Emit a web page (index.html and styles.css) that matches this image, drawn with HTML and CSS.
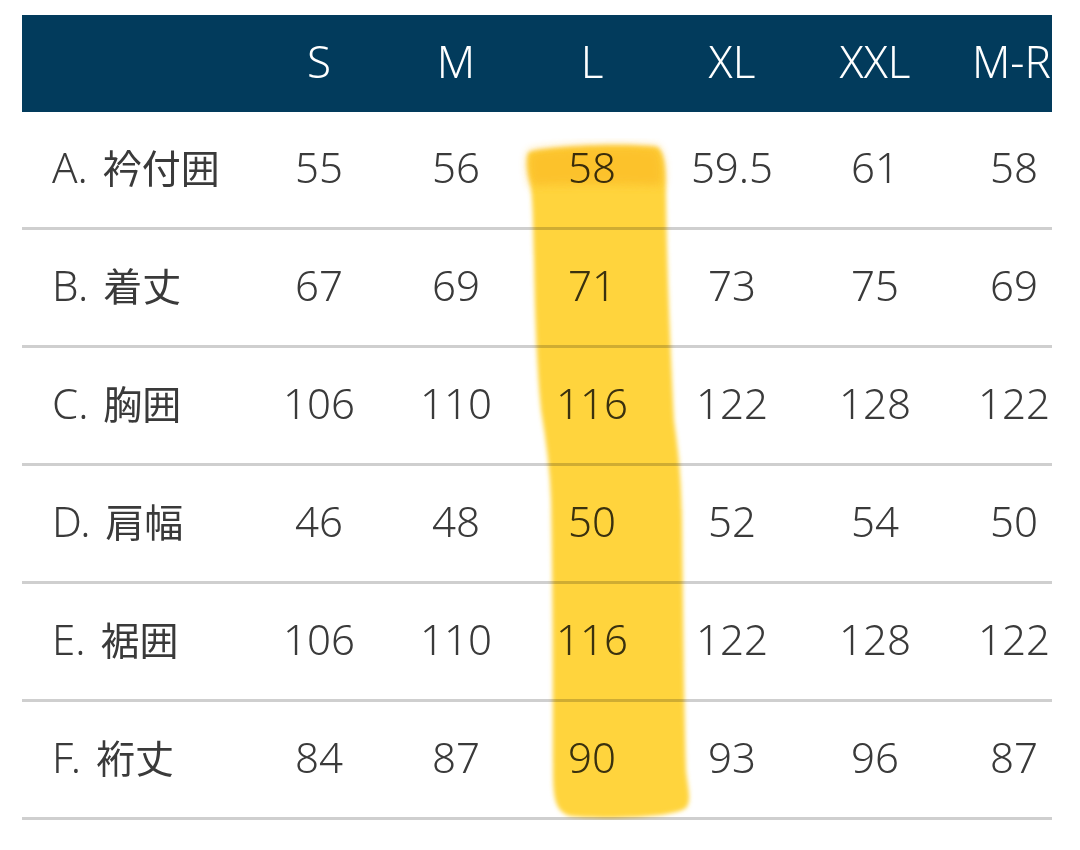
FILE: index.html
```html
<!DOCTYPE html>
<html lang="ja">
<head>
<meta charset="utf-8">
<title>サイズ表</title>
<link rel="stylesheet" href="styles.css">
</head>
<body>
<div class="sheet">
  <div class="table">
    <div class="row head">
      <div class="cell label"></div>
      <div class="cell">S</div>
      <div class="cell">M</div>
      <div class="cell">L</div>
      <div class="cell">XL</div>
      <div class="cell">XXL</div>
      <div class="cell">M-R</div>
    </div>
    <div class="row">
      <div class="cell label">A. <span class="jp">衿付囲</span></div>
      <div class="cell">55</div><div class="cell">56</div><div class="cell">58</div>
      <div class="cell">59.5</div><div class="cell">61</div><div class="cell">58</div>
    </div>
    <div class="row">
      <div class="cell label">B. <span class="jp">着丈</span></div>
      <div class="cell">67</div><div class="cell">69</div><div class="cell">71</div>
      <div class="cell">73</div><div class="cell">75</div><div class="cell">69</div>
    </div>
    <div class="row">
      <div class="cell label">C. <span class="jp">胸囲</span></div>
      <div class="cell">106</div><div class="cell">110</div><div class="cell">116</div>
      <div class="cell">122</div><div class="cell">128</div><div class="cell">122</div>
    </div>
    <div class="row">
      <div class="cell label">D. <span class="jp">肩幅</span></div>
      <div class="cell">46</div><div class="cell">48</div><div class="cell">50</div>
      <div class="cell">52</div><div class="cell">54</div><div class="cell">50</div>
    </div>
    <div class="row">
      <div class="cell label">E. <span class="jp">裾囲</span></div>
      <div class="cell">106</div><div class="cell">110</div><div class="cell">116</div>
      <div class="cell">122</div><div class="cell">128</div><div class="cell">122</div>
    </div>
    <div class="row">
      <div class="cell label">F. <span class="jp">裄丈</span></div>
      <div class="cell">84</div><div class="cell">87</div><div class="cell">90</div>
      <div class="cell">93</div><div class="cell">96</div><div class="cell">87</div>
    </div>
  </div>
  <svg class="marker" viewBox="0 0 1080 850" aria-hidden="true">
    <defs>
      <filter id="soft" x="-10%" y="-10%" width="120%" height="120%">
        <feGaussianBlur stdDeviation="2.2"/>
      </filter>
      <filter id="softer" x="-20%" y="-20%" width="140%" height="140%">
        <feGaussianBlur stdDeviation="5"/>
      </filter>
    </defs>
    <path filter="url(#soft)" fill="#ffd43c" d="M529 152 C 560 145, 630 144, 657 147 C 664 152, 666 165, 666 200 C 667 260, 669 320, 674 420 C 678 450, 681 470, 682 520 C 683 600, 684 700, 686 770 C 688 790, 692 800, 686 808 C 672 818, 600 820, 570 816 C 556 812, 553 800, 553 770 C 553 700, 553 600, 551 500 C 550 470, 546 440, 541 410 C 537 370, 535 320, 534 260 C 533 220, 533 200, 530 182 C 527 170, 526 158, 529 152 Z"/>
    <path filter="url(#softer)" fill="#fbbc28" opacity="0.75" d="M530 152 C 560 146, 630 145, 657 148 C 663 156, 664 170, 662 186 C 620 184, 570 184, 532 186 C 528 175, 527 160, 530 152 Z"/>
  </svg>
</div>
</body>
</html>
```

FILE: styles.css
```css
html, body {
  margin: 0;
  padding: 0;
  background: #ffffff;
}

body {
  padding: 15px 0 0 22px;
  font-family: "Noto Sans", "Noto Sans CJK JP", sans-serif;
  color: #3a3a3a;
}

.sheet {
  position: relative;
  width: 1030px;
}

.table {
  width: 1030px;
  overflow: hidden;
}

.row {
  display: grid;
  grid-template-columns: 228px 138px 136px 136px 144px 142px 136px;
  width: 1060px;
  height: 115px;
  border-bottom: 3px solid #cfcfcf;
  align-items: center;
  font-size: 42px;
  font-weight: 300;
}

.row.head {
  height: 97px;
  border-bottom: 0;
  background: #023b5c;
  color: #ffffff;
  font-size: 44px;
  font-weight: 300;
  width: 1030px;
  grid-template-columns: 228px 138px 136px 136px 144px 142px 106px;
}

.row.head .cell:last-child {
  overflow: hidden;
  text-align: left;
  padding-left: 26px;
}

.cell {
  text-align: center;
  white-space: nowrap;
  line-height: 1;
  padding-bottom: 6px;
}

.cell.label {
  text-align: left;
  padding-left: 30px;
}

.jp {
  font-family: "Noto Sans CJK JP", sans-serif;
  font-size: 39px;
  font-weight: 400;
  margin-left: 4px;
}

.marker {
  position: absolute;
  left: -22px;
  top: -15px;
  width: 1080px;
  height: 850px;
  pointer-events: none;
  mix-blend-mode: multiply;
}
```
